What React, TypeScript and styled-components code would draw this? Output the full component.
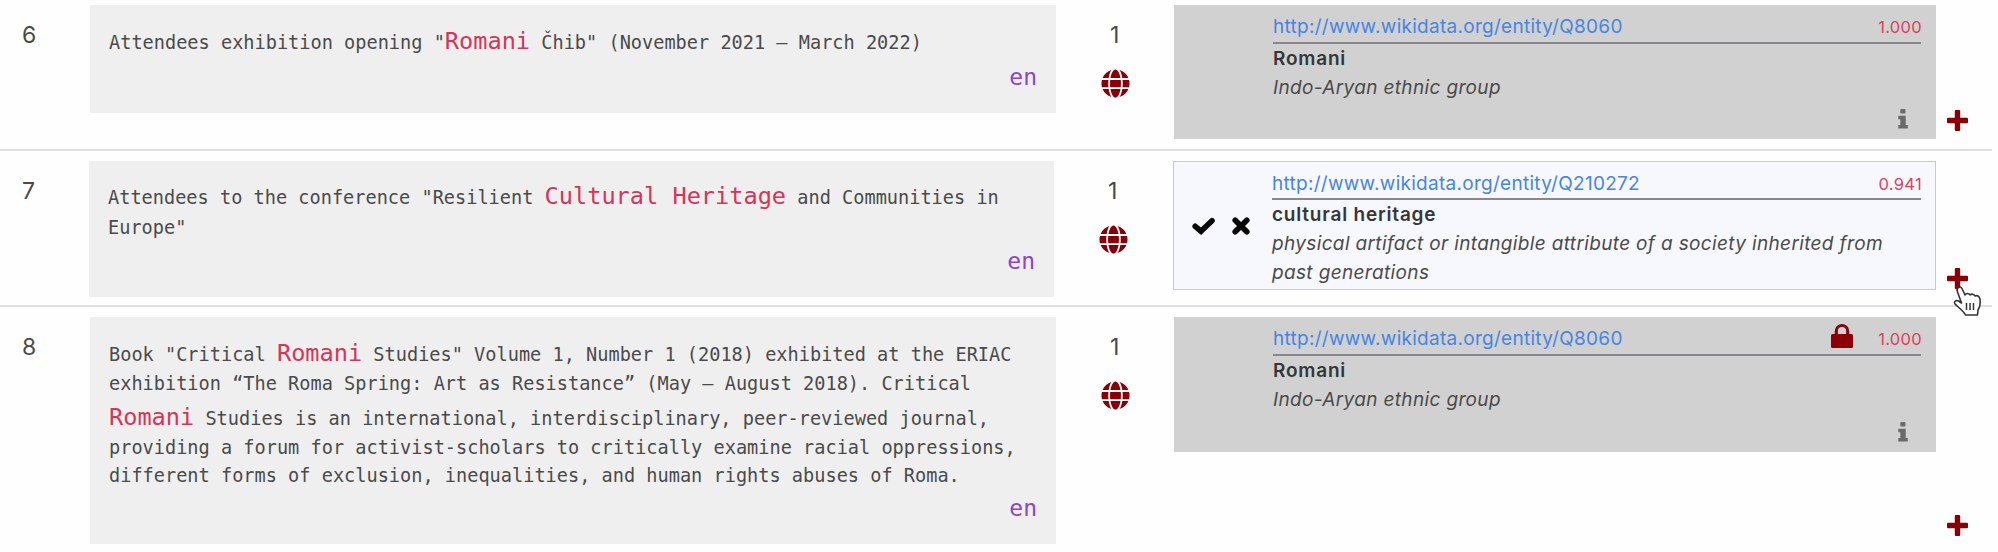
import React from "react";
import styled, { createGlobalStyle } from "styled-components";
import { FaGlobe } from "react-icons/fa";

const GlobalStyle = createGlobalStyle`
  * { box-sizing: border-box; }
  body {
    margin: 0;
    background: #fefefe;
    color: #4a4a4a;
    font-family: Inter, "Liberation Sans", sans-serif;
    overflow: hidden;
  }
`;

const Table = styled.main`
  width: 1992px;
`;

const Row = styled.section<{ $height: number }>`
  display: flex;
  align-items: flex-start;
  height: ${(p) => p.$height}px;
  padding-top: 10px;
  border-bottom: 2px solid #dfdfdf;
  &:first-child { padding-top: 5px; }
  &:last-child { border-bottom: none; }
`;

const RowNumber = styled.div<{ $width: number }>`
  flex: none;
  width: ${(p) => p.$width}px;
  padding: 16px 0 0 22px;
  font-size: 23px;
  line-height: 28px;
`;

const Source = styled.div<{ $width: number; $height: number; $top: number }>`
  flex: none;
  width: ${(p) => p.$width}px;
  height: ${(p) => p.$height}px;
  padding: ${(p) => p.$top}px 19px 0 19px;
  background: #efefef;
  font-family: "DejaVu Sans Mono", monospace;
  font-size: 18.6px;
  display: flex;
  flex-direction: column;
`;

const Line = styled.div<{ $height: number }>`
  flex: none;
  height: ${(p) => p.$height}px;
  line-height: ${(p) => p.$height}px;
  white-space: pre;
`;

const Mark = styled.mark`
  background: none;
  color: #d5355a;
  font-size: 23.6px;
`;

const Language = styled.div`
  align-self: flex-end;
  margin: auto 0 22px;
  font-size: 23px;
  line-height: 28px;
  color: #8c45d0;
`;

const Matches = styled.div<{ $width: number }>`
  flex: none;
  width: ${(p) => p.$width}px;
  padding: 16px 0 0 45px;
  display: flex;
  flex-direction: column;
  color: #850008;
`;

const Count = styled.div`
  padding-left: 9px;
  margin-bottom: 20px;
  font-size: 23px;
  line-height: 28px;
  color: #4a4a4a;
`;

const Card = styled.article<{ $width: number; $height: number; $open?: boolean }>`
  flex: none;
  display: flex;
  width: ${(p) => p.$width}px;
  height: ${(p) => p.$height}px;
  padding-right: ${(p) => (p.$open ? 14 : 15)}px;
  background: ${(p) => (p.$open ? "#f7f7fe" : "#d1d1d1")};
  border: ${(p) => (p.$open ? "1px solid #c9c9d0" : "none")};
`;

const Actions = styled.div<{ $width: number }>`
  flex: none;
  width: ${(p) => p.$width}px;
  display: flex;
  gap: 17px;
  padding: 55px 0 0 18px;
`;

const Details = styled.div`
  flex: 1;
  display: flex;
  flex-direction: column;
  min-width: 0;
  white-space: nowrap;
  font-size: 19px;
  line-height: 29px;
`;

const Header = styled.header<{ $height: number }>`
  display: flex;
  align-items: center;
  height: ${(p) => p.$height}px;
  padding-top: 6px;
  border-bottom: 2px solid #88888c;
`;

const EntityLink = styled.a`
  margin-right: auto;
  color: #4785e0;
  letter-spacing: 0.28px;
`;

const Score = styled.span`
  margin: 2px -1px 0 0;
  color: #d9415f;
  font-size: 16.5px;
  letter-spacing: 0.3px;
`;

const Title = styled.strong`
  height: 29px;
  font-weight: 600;
  color: #363636;
  letter-spacing: 0.8px;
`;

const Description = styled.em`
  letter-spacing: 0.35px;
`;

const InfoSlot = styled.div`
  align-self: flex-end;
  margin: auto 13px 10px 0;
  line-height: 0;
`;

const LockSlot = styled.div`
  margin: -7px 25px 0 0;
  line-height: 0;
`;

const AddButton = styled.div<{ $top: number }>`
  padding: ${(p) => p.$top}px 0 0 11px;
  line-height: 0;
`;

const Pointer = styled.svg`
  position: absolute;
  left: 1952px;
  top: 285px;
`;

const CheckIcon = () => (
  <svg width="23" height="18" viewBox="0 0 23 18">
    <path d="M3.2 9.3 9 14.2 20 3.7" fill="none" stroke="#080808" strokeWidth="5.6" strokeLinecap="round" />
  </svg>
);

const CrossIcon = () => (
  <svg width="18" height="18" viewBox="0 0 18 18">
    <path d="M3.200 3.200 14.800 14.800M14.800 3.200 3.200 14.800" fill="none" stroke="#080808" strokeWidth="5.6" strokeLinecap="round" />
  </svg>
);

const PlusIcon = () => (
  <svg width="21" height="21" viewBox="0 0 21 21" fill="#880006">
    <rect x="7.800" y="0" width="5.400" height="21" rx="1" />
    <rect x="0" y="7.800" width="21" height="5.400" rx="1" />
  </svg>
);

const LockIcon = () => (
  <svg width="22" height="25" viewBox="0 0 22 25">
    <path d="M5.300 12V8.200a5.700 5.700 0 0 1 11.400 0V12" fill="none" stroke="#7c0a10" strokeWidth="3.200" />
    <rect x="0" y="11" width="22" height="14" rx="1.500" fill="#8b0006" />
  </svg>
);

const InfoIcon = () => (
  <svg width="10" height="20" viewBox="0 0 10 20" fill="#6a6a6a">
    <rect x="2.300" y="0" width="5.200" height="4.400" rx="1" />
    <path d="M.3 6.800H7.700V16H9.800V19.600H.3V16H2.300V10.200H.3Z" />
  </svg>
);

type Entry = {
  id: number;
  height: number;
  left: number;
  sourceWidth: number;
  sourceHeight: number;
  sourceTop: number;
  lines: { height: number; parts: string[] }[];
  cardHeight: number;
  entity: string;
  score: string;
  title: string;
  description: string[];
  open?: boolean;
  locked?: boolean;
  addTop: number;
};

const entries: Entry[] = [
  {
    id: 6, height: 151, left: 90, sourceWidth: 966, sourceHeight: 108, sourceTop: 21,
    lines: [{ height: 30, parts: ['Attendees exhibition opening "', "Romani", ' Čhib" (November 2021 – March 2022)'] }],
    cardHeight: 134, entity: "Q8060", score: "1.000",
    title: "Romani", description: ["Indo-Aryan ethnic group"], addTop: 105,
  },
  {
    id: 7, height: 156, left: 89, sourceWidth: 965, sourceHeight: 136, sourceTop: 20,
    lines: [
      { height: 30, parts: ['Attendees to the conference "Resilient ', "Cultural Heritage", " and Communities in"] },
      { height: 34, parts: ['Europe"'] },
    ],
    cardHeight: 129, entity: "Q210272", score: "0.941",
    title: "cultural heritage",
    description: ["physical artifact or intangible attribute of a society inherited from", "past generations"],
    open: true, addTop: 107,
  },
  {
    id: 8, height: 245, left: 90, sourceWidth: 966, sourceHeight: 227, sourceTop: 21,
    lines: [
      { height: 30, parts: ['Book "Critical ', "Romani", ' Studies" Volume 1, Number 1 (2018) exhibited at the ERIAC'] },
      { height: 32, parts: ["exhibition “The Roma Spring: Art as Resistance” (May – August 2018). Critical"] },
      { height: 34, parts: ["", "Romani", " Studies is an international, interdisciplinary, peer-reviewed journal,"] },
      { height: 28, parts: ["providing a forum for activist-scholars to critically examine racial oppressions,"] },
      { height: 28, parts: ["different forms of exclusion, inequalities, and human rights abuses of Roma."] },
    ],
    cardHeight: 135, entity: "Q8060", score: "1.000",
    title: "Romani", description: ["Indo-Aryan ethnic group"], locked: true, addTop: 198,
  },
];

export default function App() {
  return (
    <>
      <GlobalStyle />
      <Table>
        {entries.map((e) => (
          <Row key={e.id} $height={e.height}>
            <RowNumber $width={e.left}>{e.id}</RowNumber>
            <Source $width={e.sourceWidth} $height={e.sourceHeight} $top={e.sourceTop}>
              {e.lines.map((line, i) => (
                <Line key={i} $height={line.height}>
                  {line.parts[0]}
                  {line.parts[1] && <Mark>{line.parts[1]}</Mark>}
                  {line.parts[2]}
                </Line>
              ))}
              <Language>en</Language>
            </Source>
            <Matches $width={e.open ? 119 : 118}>
              <Count>1</Count>
              <FaGlobe size={29} />
            </Matches>
            <Card $width={e.open ? 763 : 762} $height={e.cardHeight} $open={e.open}>
              <Actions $width={e.open ? 98 : 99}>
                {e.open && (
                  <>
                    <CheckIcon />
                    <CrossIcon />
                  </>
                )}
              </Actions>
              <Details>
                <Header $height={e.open ? 38 : 39}>
                  <EntityLink>http://www.wikidata.org/entity/{e.entity}</EntityLink>
                  {e.locked && (
                    <LockSlot>
                      <LockIcon />
                    </LockSlot>
                  )}
                  <Score>{e.score}</Score>
                </Header>
                <Title>{e.title}</Title>
                {e.description.map((d) => (
                  <Description key={d}>{d}</Description>
                ))}
                {!e.open && (
                  <InfoSlot>
                    <InfoIcon />
                  </InfoSlot>
                )}
              </Details>
            </Card>
            <AddButton $top={e.addTop}>
              <PlusIcon />
            </AddButton>
          </Row>
        ))}
      </Table>
      <Pointer width="30" height="33" viewBox="0 0 30 33">
        <path
          d="M6 3C7.5 1.5 9.5 2 10.5 4.5L13 10C14 8 17 8 18 10C19.5 8.5 22 9 23 11C25 10 27.500 11 28 14C28.500 18 28 22 26 25L25.500 30H13.500C11.500 26 6 22 3 19C1.500 17 4 14.500 6.500 16L9.500 18L5.500 7C5 5.500 5 4 6 3Z"
          fill="#fff" stroke="#333" strokeWidth="1.6" strokeLinejoin="round"
        />
        <path d="M14.500 18V25M18 18V25M21.500 18V25" stroke="#333" strokeWidth="1.500" />
      </Pointer>
    </>
  );
}
